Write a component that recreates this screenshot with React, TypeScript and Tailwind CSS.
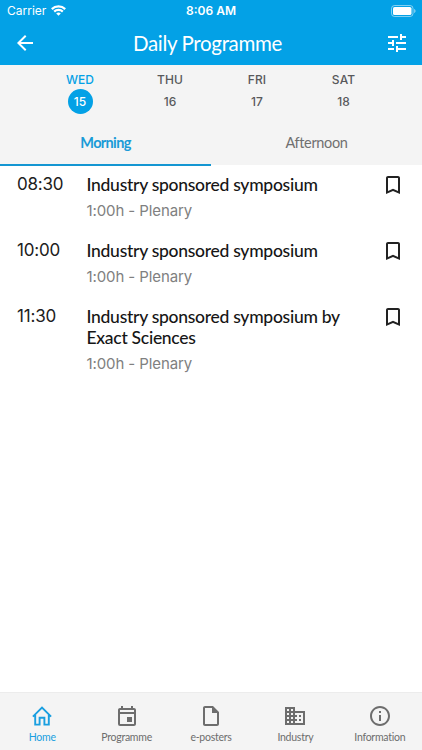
import {
  MdArrowBack,
  MdBookmarkBorder,
  MdDomain,
  MdInfoOutline,
  MdOutlineEvent,
  MdOutlineInsertDriveFile,
  MdTune,
} from 'react-icons/md';

const days = [
  { name: 'WED', date: 15, width: 'w-[88px]', active: true },
  { name: 'THU', date: 16, width: 'w-[92px]' },
  { name: 'FRI', date: 17, width: 'w-[82px]' },
  { name: 'SAT', date: 18, width: 'w-[91px]' },
];

const sessions = [
  { time: '08:30', title: 'Industry sponsored symposium', info: '1:00h - Plenary' },
  { time: '10:00', title: 'Industry sponsored symposium', info: '1:00h - Plenary' },
  { time: '11:30', title: 'Industry sponsored symposium by Exact Sciences', info: '1:00h - Plenary' },
];

function HomeIcon() {
  return (
    <svg width="24" height="24" viewBox="0 0 24 24" fill="none" stroke="currentColor" strokeWidth="1.9">
      <path d="M2.9 12.6 12 3.6l9.1 9M5.2 11v9.6h4.4v-6.8h4.8v6.8h4.4V11" />
    </svg>
  );
}

const navItems = [
  { label: 'Home', icon: <HomeIcon />, active: true },
  { label: 'Programme', icon: <MdOutlineEvent size={24} /> },
  { label: 'e-posters', icon: <MdOutlineInsertDriveFile size={24} /> },
  { label: 'Industry', icon: <MdDomain size={24} /> },
  { label: 'Information', icon: <MdInfoOutline size={24} /> },
];

function StatusBar() {
  return (
    <div className="grid h-[22px] grid-cols-3 items-center pr-[6px] pl-[6px] font-['Inter',sans-serif] text-[12px]">
      <div className="flex items-center gap-[5px] pl-px">
        <span>Carrier</span>
        <svg className="-mt-[2px]" width="15" height="11" viewBox="0 0 15 11" fill="none" stroke="currentColor" strokeWidth="2.2">
          <path d="M.8 4.1a9.6 9.6 0 0 1 13.4 0M3.2 6.6a6.1 6.1 0 0 1 8.6 0" />
          <path d="M7.5 10.8 5.2 8.5a3.3 3.3 0 0 1 4.6 0z" fill="currentColor" stroke="none" />
        </svg>
      </div>
      <span className="text-center font-semibold">8:06 AM</span>
      <svg className="-mt-px justify-self-end" width="25" height="12" viewBox="0 0 25 12" fill="none">
        <rect x=".5" y=".5" width="21.5" height="11" rx="3" stroke="white" strokeOpacity=".5" />
        <rect x="2" y="2" width="18.5" height="8" rx="1.6" fill="white" />
        <path d="M23.2 4v4c.8-.3 1.3-1.1 1.3-2s-.5-1.7-1.3-2z" fill="white" fillOpacity=".55" />
      </svg>
    </div>
  );
}

function Header() {
  return (
    <header className="h-[65px] shrink-0 bg-[#03a1e6] text-white">
      <StatusBar />
      <div className="grid h-[42px] grid-cols-[48px_1fr_55px] items-center pr-[13px] pl-[13px]">
        <MdArrowBack size={24} />
        <h1 className="text-center text-[20.5px] tracking-[-0.33px] whitespace-nowrap">Daily Programme</h1>
        <MdTune size={24} className="justify-self-end" />
      </div>
    </header>
  );
}

function DayPicker() {
  return (
    <div className="flex h-[56px] pt-[6px] pl-[36px] font-['Inter',sans-serif] text-[12px]">
      {days.map((day) => (
        <div key={day.name} className={`flex flex-col items-center ${day.width} ${day.active ? 'text-[#03a1e6]' : 'text-[#58595b]'}`}>
          <span className="h-[18px] leading-[18px] font-medium tracking-[0.1px]">{day.name}</span>
          <span className={`flex size-[25px] items-center justify-center rounded-full font-medium ${day.active ? 'bg-[#03a1e6] text-white' : ''}`}>
            {day.date}
          </span>
        </div>
      ))}
    </div>
  );
}

export default function App() {
  return (
    <div className="flex h-[750px] w-[422px] flex-col overflow-hidden bg-white font-['Lato',sans-serif]">
      <Header />

      <div className="h-[100px] shrink-0 bg-[#f4f4f4]">
        <DayPicker />
        <div className="grid h-[44px] grid-cols-2 text-center text-[14.5px] leading-[43px]">
          <button className="border-b-2 border-[#1496d2] font-bold tracking-[-0.65px] text-[#1a9bd7]">Morning</button>
          <button className="border-b-2 border-transparent tracking-[-0.35px] text-[#707070]">Afternoon</button>
        </div>
      </div>

      {/* Sessions */}
      <main className="flex flex-1 flex-col gap-[14px] pt-[9px] pr-[17px] pl-[17px]">
        {sessions.map((session) => (
          <div key={session.time} className="flex">
            <time className="w-[69.5px] shrink-0 font-['Inter',sans-serif] text-[17px] leading-[21px] tracking-[-0.2px] text-[#202020]">{session.time}</time>
            <div className="flex-1">
              <h2 className="w-[265px] text-[17.5px] leading-[21px] font-medium tracking-[-0.28px] text-[#161616]">{session.title}</h2>
              <p className="mt-[5px] h-[26px] font-['Inter',sans-serif] text-[15px] leading-[22px] tracking-[-0.1px] text-[#808080]">{session.info}</p>
            </div>
            <MdBookmarkBorder size={24} className="-mt-px shrink-0 text-[#222]" />
          </div>
        ))}
      </main>

      {/* Bottom navigation */}
      <nav className="grid h-[58px] shrink-0 grid-cols-5 border-t border-[#ececec] bg-[#f4f4f4] pt-[11px]">
        {navItems.map((item) => (
          <a key={item.label} href="#" className={`flex flex-col items-center gap-[2px] ${item.active ? 'text-[#1a9fe0]' : 'text-[#6d6d6d]'}`}>
            {item.icon}
            <span className="text-[10.5px] leading-[15px] tracking-[-0.25px]">{item.label}</span>
          </a>
        ))}
      </nav>
    </div>
  );
}
